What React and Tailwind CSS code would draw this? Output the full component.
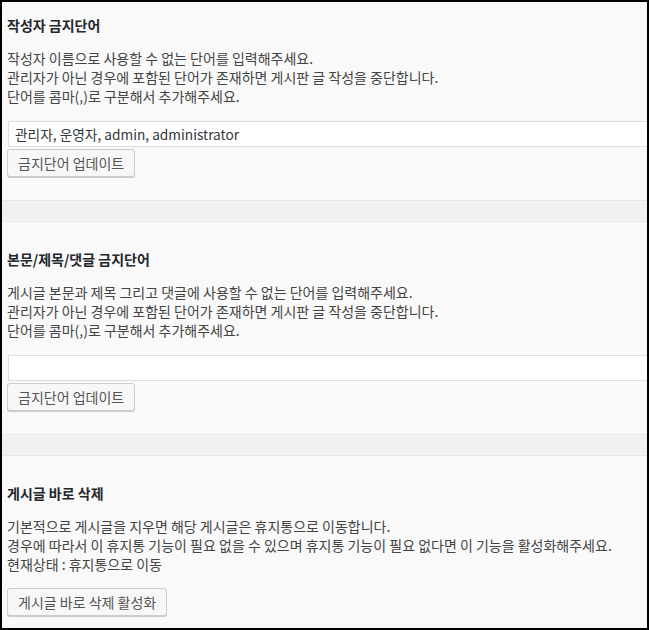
const FONT = { fontFamily: '"Noto Sans CJK KR", "Noto Sans", sans-serif' };

const SECTIONS = [
  {
    title: '작성자 금지단어',
    lines: [
      '작성자 이름으로 사용할 수 없는 단어를 입력해주세요.',
      '관리자가 아닌 경우에 포함된 단어가 존재하면 게시판 글 작성을 중단합니다.',
      '단어를 콤마(,)로 구분해서 추가해주세요.',
    ],
    input: '관리자, 운영자, admin, administrator',
    button: '금지단어 업데이트',
  },
  {
    title: '본문/제목/댓글 금지단어',
    lines: [
      '게시글 본문과 제목 그리고 댓글에 사용할 수 없는 단어를 입력해주세요.',
      '관리자가 아닌 경우에 포함된 단어가 존재하면 게시판 글 작성을 중단합니다.',
      '단어를 콤마(,)로 구분해서 추가해주세요.',
    ],
    input: '',
    button: '금지단어 업데이트',
  },
  {
    title: '게시글 바로 삭제',
    lines: [
      '기본적으로 게시글을 지우면 해당 게시글은 휴지통으로 이동합니다.',
      '경우에 따라서 이 휴지통 기능이 필요 없을 수 있으며 휴지통 기능이 필요 없다면 이 기능을 활성화해주세요.',
      '현재상태 : 휴지통으로 이동',
    ],
    button: '게시글 바로 삭제 활성화',
  },
];

const btn =
  'h-[28px] px-[10px] rounded-[3px] border border-[#cccccc] bg-[#f7f7f7] shadow-[0_1px_0_#cccccc] text-[14px] text-[#555] whitespace-nowrap';

function Section({ s, first }) {
  return (
    <div className={`bg-[#f9f9f9] px-[5px] pb-[23px] ${first ? 'pt-[13px]' : 'pt-[27px]'}`}>
      <h3 className="text-[14px] leading-[20px] font-bold text-[#23282d] whitespace-nowrap">{s.title}</h3>
      <div className="mt-[14px] text-[14px] leading-[19px] text-[#444]">
        {s.lines.map((l) => (
          <p key={l} className="whitespace-nowrap">{l}</p>
        ))}
      </div>
      {s.input !== undefined ? (
        <div className="mt-[15px]">
          <input
            readOnly
            value={s.input}
            style={FONT}
            className="block w-[700px] h-[26px] ml-px px-[6px] bg-white border border-[#dddddd] text-[13.7px] text-[#32373c] outline-none"
          />
          <button style={FONT} className={`mt-[2px] ${btn}`}>
            {s.button}
          </button>
        </div>
      ) : (
        <button style={FONT} className={`mt-[14px] ${btn}`}>
          {s.button}
        </button>
      )}
    </div>
  );
}

export default function App() {
  return (
    <div
      style={FONT}
      className="w-[649px] h-[630px] overflow-hidden border-2 border-black bg-[#f9f9f9]"
    >
      {SECTIONS.map((s, i) => (
        <div key={s.title}>
          {i > 0 && <div className="h-[22px] bg-[#f1f1f1] border-y border-[#e5e5e5]" />}
          <Section s={s} first={i === 0} />
        </div>
      ))}
    </div>
  );
}
